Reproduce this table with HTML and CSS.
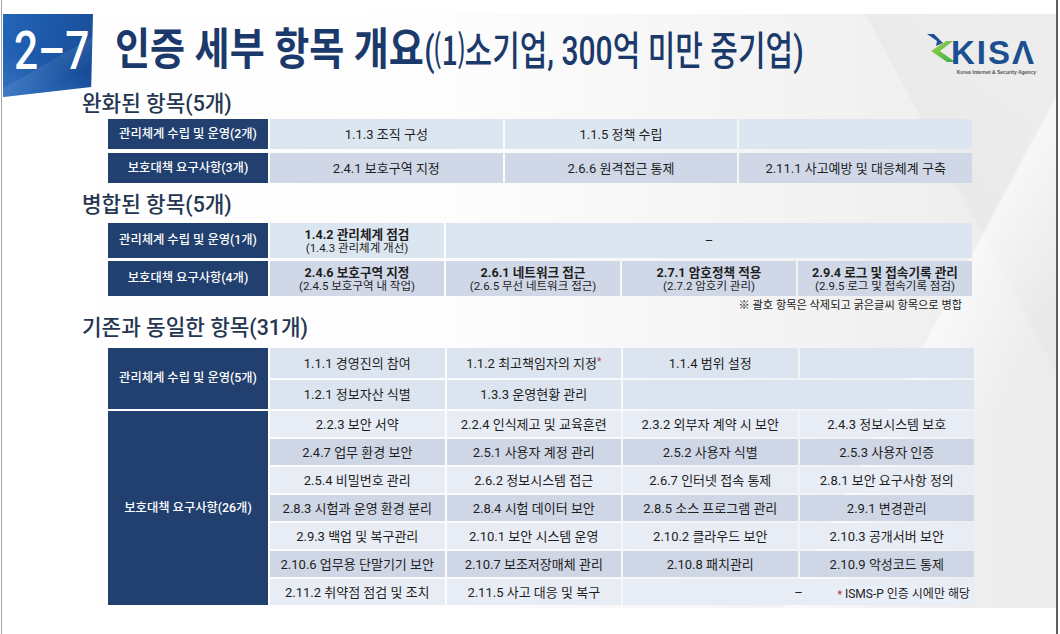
FILE: index.html
```html
<!DOCTYPE html>
<html lang="ko">
<head>
<meta charset="utf-8">
<title>2-7 인증 세부 항목 개요</title>
<link rel="stylesheet" href="styles.css">
</head>
<body>
<div class="frame">
  <div class="slide">
    <header class="head">
      <div class="badge"><span class="badge-num">2–7</span></div>
      <h1 class="title"><span class="t-main">인증 세부 항목 개요</span><span class="t-sub">(⑴소기업, 300억 미만 중기업)</span></h1>
      <div class="logo">
        <svg class="logo-mark" width="30" height="32" viewBox="0 0 30 32">
          <defs>
            <linearGradient id="gg" x1="0" y1="0" x2="1" y2="1">
              <stop offset="0" stop-color="#a6d04a"/>
              <stop offset="1" stop-color="#3aae4a"/>
            </linearGradient>
          </defs>
          <polygon points="1,2 8,2 17,11 10,14 11,9" fill="#1f4f9a"/>
          <polygon points="20,9 27,9 14,19 29,30 21,30 5,19" fill="url(#gg)"/>
        </svg>
        <div class="logo-text">
          <span class="logo-word">KISΛ</span>
          <span class="logo-tag">Korea Internet &amp; Security Agency</span>
        </div>
      </div>
    </header>

    <main class="content">
      <h2 class="sec-title">완화된 항목(5개)</h2>
      <div class="tbl tbl-a">
        <div class="cell lab">관리체계 수립 및 운영(2개)</div>
        <div class="cell lt">1.1.3 조직 구성</div>
        <div class="cell lt">1.1.5 정책 수립</div>
        <div class="cell lt"></div>
        <div class="cell lab">보호대책 요구사항(3개)</div>
        <div class="cell dk">2.4.1 보호구역 지정</div>
        <div class="cell dk">2.6.6 원격접근 통제</div>
        <div class="cell dk">2.11.1 사고예방 및 대응체계 구축</div>
      </div>

      <h2 class="sec-title sec-2">병합된 항목(5개)</h2>
      <div class="tbl tbl-b">
        <div class="cell lab">관리체계 수립 및 운영(1개)</div>
        <div class="cell lt two"><b>1.4.2 관리체계 점검</b><small>(1.4.3 관리체계 개선)</small></div>
        <div class="cell lt span3">–</div>
        <div class="cell lab">보호대책 요구사항(4개)</div>
        <div class="cell dk two"><b>2.4.6 보호구역 지정</b><small>(2.4.5 보호구역 내 작업)</small></div>
        <div class="cell dk two"><b>2.6.1 네트워크 접근</b><small>(2.6.5 무선 네트워크 접근)</small></div>
        <div class="cell dk two"><b>2.7.1 암호정책 적용</b><small>(2.7.2 암호키 관리)</small></div>
        <div class="cell dk two"><b>2.9.4 로그 및 접속기록 관리</b><small>(2.9.5 로그 및 접속기록 점검)</small></div>
      </div>
      <p class="note">※ 괄호 항목은 삭제되고 굵은글씨 항목으로 병합</p>

      <h2 class="sec-title sec-3">기존과 동일한 항목(31개)</h2>
      <div class="tbl tbl-c">
        <div class="cell lab lab-1">관리체계 수립 및 운영(5개)</div>
        <div class="cell bl">1.1.1 경영진의 참여</div>
        <div class="cell bl">1.1.2 최고책임자의 지정<span class="ast">*</span></div>
        <div class="cell bl">1.1.4 범위 설정</div>
        <div class="cell bl"></div>
        <div class="cell bl">1.2.1 정보자산 식별</div>
        <div class="cell bl">1.3.3 운영현황 관리</div>
        <div class="cell bl span2"></div>

        <div class="cell lab lab-2">보호대책 요구사항(26개)</div>
        <div class="cell lt2">2.2.3 보안 서약</div>
        <div class="cell lt2">2.2.4 인식제고 및 교육훈련</div>
        <div class="cell lt2">2.3.2 외부자 계약 시 보안</div>
        <div class="cell lt2">2.4.3 정보시스템 보호</div>

        <div class="cell dk2">2.4.7 업무 환경 보안</div>
        <div class="cell dk2">2.5.1 사용자 계정 관리</div>
        <div class="cell dk2">2.5.2 사용자 식별</div>
        <div class="cell dk2">2.5.3 사용자 인증</div>

        <div class="cell lt2">2.5.4 비밀번호 관리</div>
        <div class="cell lt2">2.6.2 정보시스템 접근</div>
        <div class="cell lt2">2.6.7 인터넷 접속 통제</div>
        <div class="cell lt2">2.8.1 보안 요구사항 정의</div>

        <div class="cell dk2">2.8.3 시험과 운영 환경 분리</div>
        <div class="cell dk2">2.8.4 시험 데이터 보안</div>
        <div class="cell dk2">2.8.5 소스 프로그램 관리</div>
        <div class="cell dk2">2.9.1 변경관리</div>

        <div class="cell lt2">2.9.3 백업 및 복구관리</div>
        <div class="cell lt2">2.10.1 보안 시스템 운영</div>
        <div class="cell lt2">2.10.2 클라우드 보안</div>
        <div class="cell lt2">2.10.3 공개서버 보안</div>

        <div class="cell dk2">2.10.6 업무용 단말기기 보안</div>
        <div class="cell dk2">2.10.7 보조저장매체 관리</div>
        <div class="cell dk2">2.10.8 패치관리</div>
        <div class="cell dk2">2.10.9 악성코드 통제</div>

        <div class="cell lt2">2.11.2 취약점 점검 및 조치</div>
        <div class="cell lt2">2.11.5 사고 대응 및 복구</div>
        <div class="cell lt2 span2 merged">–<span class="isms"><span class="ast">*</span> ISMS-P 인증 시에만 해당</span></div>
      </div>
    </main>
  </div>
</div>
</body>
</html>
```

FILE: styles.css
```css
* { box-sizing: border-box; }

html, body {
  margin: 0;
  padding: 0;
  background: #ffffff;
}

body {
  font-family: Roboto, "Noto Sans CJK KR", sans-serif;
  color: #1e1e1e;
}

.frame {
  width: 1057px;
  height: 634px;
  margin-left: 1px;
  border-left: 1px solid #a3a3a3;
  border-right: 2px solid #5e5e5e;
  padding-top: 14px;
}

.slide {
  height: 594px;
  background:
    linear-gradient(118deg, transparent 80%, rgba(255,255,255,0.6) 80.3%, transparent 88%),
    linear-gradient(62deg, transparent 86%, rgba(228,228,228,0.5) 86.2%, transparent 96%),
    linear-gradient(90deg, #ffffff 0%, #fdfdfd 42%, #f4f4f4 72%, #ececec 100%);
}

/* ---------- header ---------- */
.head {
  display: flex;
  align-items: flex-start;
  height: 78px;
}

.badge {
  flex: none;
  width: 90px;
  height: 83px;
  margin-left: 1px;
  padding: 11px 0 0 11px;
  clip-path: polygon(0 0, 100% 0, 98% 88%, 0 100%);
  background:
    linear-gradient(150deg, transparent 55%, rgba(255,255,255,0.08) 55.5%, transparent 75%),
    linear-gradient(20deg, rgba(80,140,215,0.45) 0%, transparent 45%),
    linear-gradient(110deg, #2465b7 0%, #1d58a8 45%, #184a95 100%);
}

.badge-num {
  display: inline-block;
  white-space: nowrap;
  font-family: Roboto, sans-serif;
  font-weight: 500;
  font-size: 53px;
  line-height: 1;
  color: #ffffff;
  transform: scaleX(0.8);
  transform-origin: 0 0;
}

.title {
  flex: 1 1 0;
  min-width: 0;
  margin: 14px 0 0 22px;
  white-space: nowrap;
  font-family: Roboto, "Noto Sans CJK KR", sans-serif;
  font-size: 44px;
  line-height: 44px;
  font-weight: 700;
  color: #1b3a6b;
  transform: scaleX(0.866);
  transform-origin: 0 0;
}

.t-sub {
  display: inline-block;
  font-size: 40px;
  font-weight: 500;
  transform: scaleX(0.866);
  transform-origin: 0 0;
}

.logo {
  flex: none;
  display: flex;
  align-items: flex-start;
  margin: 18px 20px 0 auto;
}

.logo-mark {
  display: block;
  flex: none;
}

.logo-text {
  display: flex;
  flex-direction: column;
  align-items: flex-end;
  margin: 4px 0 0 -5px;
}

.logo-word {
  font-family: "Liberation Sans", Arial, sans-serif;
  font-weight: 700;
  font-size: 33px;
  line-height: 33px;
  letter-spacing: 2px;
  color: #1c4f8f;
}

.logo-tag {
  font-family: "Liberation Sans", Arial, sans-serif;
  font-weight: 700;
  font-size: 5px;
  line-height: 6px;
  color: #555555;
  white-space: nowrap;
}

/* ---------- content ---------- */
.content {
  display: block;
  padding-left: 80px;
}

.sec-title {
  margin: 0;
  font-family: Roboto, "Noto Sans CJK KR", sans-serif;
  font-size: 21.3px;
  line-height: 24px;
  font-weight: 500;
  color: #253651;
}

.sec-2 { margin-top: 10px; }
.sec-3 { margin-top: 3px; }

.tbl {
  display: grid;
  width: 864px;
  margin-left: 26px;
  column-gap: 2px;
}

.tbl-a {
  grid-template-columns: 160px repeat(3, 1fr);
  grid-template-rows: 30px 30px;
  row-gap: 4px;
  margin-top: 3px;
}

.tbl-b {
  grid-template-columns: 160px repeat(4, 1fr);
  grid-template-rows: 35px 35px;
  row-gap: 3px;
  margin-top: 6px;
}

.tbl-c {
  width: 866px;
  grid-template-columns: 160px repeat(4, 1fr);
  grid-template-rows: 30px 29px repeat(7, 26px);
  row-gap: 2px;
  margin-top: 8px;
}

.cell {
  display: flex;
  align-items: center;
  justify-content: center;
  text-align: center;
  font-size: 13px;
  line-height: 15px;
  white-space: nowrap;
  color: #1e1e1e;
}

.lab {
  background: #213f6f;
  color: #ffffff;
  font-weight: 500;
  font-size: 12.3px;
}

.lab-1 { grid-row: span 2; }
.lab-2 { grid-row: span 7; }

.lt  { background: #dce6f1; }
.dk  { background: #d0d8e8; }
.bl  { background: #dbe4ef; }
.lt2 { background: #e8ecf4; }
.dk2 { background: #cfd6e5; }

.span2 { grid-column: span 2; }
.span3 { grid-column: span 3; }

.two {
  flex-direction: column;
}

.two b {
  font-weight: 700;
  font-size: 12.6px;
  line-height: 15px;
}

.two small {
  font-size: 11.5px;
  line-height: 13px;
}

.ast {
  color: #b23a4a;
  font-size: 10px;
  align-self: flex-start;
  margin-top: 6px;
}

.note {
  width: 880px;
  margin: 3px 0 0 0;
  text-align: right;
  font-size: 11.2px;
  line-height: 14px;
  color: #222222;
}

.merged {
  position: relative;
}

.isms {
  position: absolute;
  right: 2px;
  bottom: 2px;
  padding: 1px 2px;
  font-size: 12px;
  line-height: 14px;
  color: #222222;
  background: #eaeef6;
}

.isms .ast {
  margin-top: 0;
  font-weight: 700;
}
```
